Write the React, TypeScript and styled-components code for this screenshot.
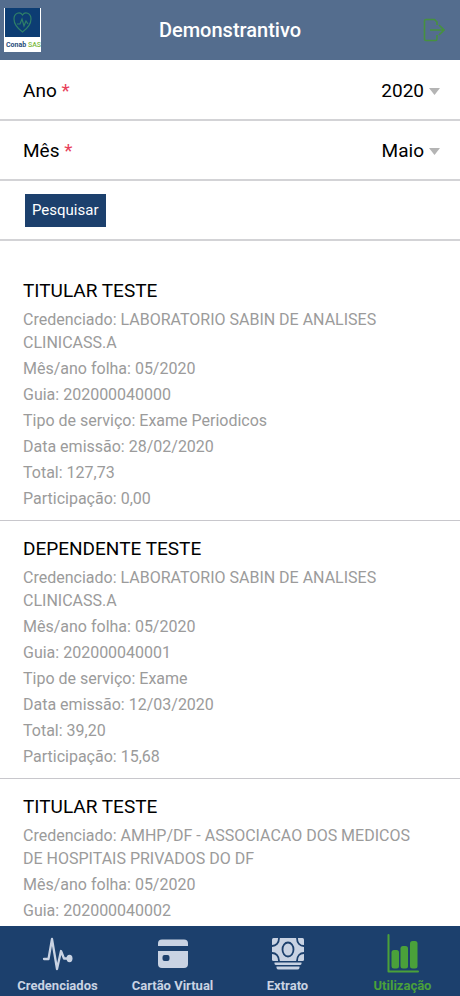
import React from "react";
import styled, { createGlobalStyle } from "styled-components";

const navy = "#1c406d";
const line = "#c8c7cc";

const GlobalStyle = createGlobalStyle`
  *, *::before, *::after { box-sizing: border-box; }
  body {
    margin: 0;
    background: #fff;
    color: #000;
    font-family: Roboto, "Liberation Sans", sans-serif;
  }
`;

const Screen = styled.div`
  display: flex;
  flex-direction: column;
  height: 100vh;
`;

const Header = styled.header`
  display: grid;
  grid-template-columns: 1fr auto 1fr;
  align-items: center;
  flex: none;
  height: 60px;
  padding: 0 4px;
  background: #546d8e;
`;

const Logo = styled.svg`
  display: block;
  width: 37px;
  height: 44px;
`;

const Title = styled.h1`
  margin: 0;
  color: #fff;
  font-size: 20px;
  line-height: 28px;
  font-weight: 500;
`;

const ExitButton = styled.button`
  justify-self: end;
  display: flex;
  padding: 0 11px 0 0;
  border: 0;
  background: none;
  color: #46913f;
`;

const Content = styled.main`
  flex: 1;
  min-height: 0;
  padding-top: 1px;
  overflow-y: auto;
  scrollbar-width: none;
`;

const FormRow = styled.div`
  display: flex;
  align-items: center;
  justify-content: space-between;
  min-height: 60px;
  padding: 2px 20px 0 23px;
  border-bottom: 2px solid #d3d3d6;
`;

const ActionRow = styled(FormRow)`
  padding: 0 25px;
`;

const Label = styled.label`
  font-size: 19px;
  line-height: 28px;
`;

const Required = styled.span`
  color: #e8405a;
`;

const SelectBox = styled.span`
  display: flex;
  align-items: center;
  gap: 5px;
`;

const Select = styled.select`
  appearance: none;
  width: 120px;
  padding: 0;
  border: 0;
  background: none;
  color: #000;
  font: inherit;
  font-size: 19px;
  line-height: 28px;
  text-align-last: right;
`;

const SearchButton = styled.button`
  height: 33px;
  padding: 0 7px;
  border: 0;
  background: ${navy};
  color: #fff;
  font: inherit;
  font-size: 15px;
`;

const List = styled.ul`
  margin: 0;
  padding: 22px 0 0;
  list-style: none;
`;

const Item = styled.li`
  padding: 14px 30px 7px 23px;
  border-bottom: 1px solid ${line};
`;

const Name = styled.h2`
  margin: 0 0 3px;
  font-size: 19px;
  line-height: 28px;
  font-weight: 400;
`;

const Detail = styled.p`
  margin: 0 0 3px;
  color: #9b9b9b;
  font-size: 16px;
  line-height: 23px;
`;

const TabBar = styled.nav`
  display: grid;
  grid-template-columns: repeat(4, 1fr);
  flex: none;
  height: 70px;
  background: ${navy};
`;

const Tab = styled.a<{ $active?: boolean }>`
  display: flex;
  flex-direction: column;
  align-items: center;
  padding-top: 8px;
  gap: 3px;
  color: ${(p) => (p.$active ? "#4aa13a" : "#c9d3e3")};
  font-size: 13px;
  line-height: 18px;
  font-weight: 700;
  text-decoration: none;
`;

function ExitIcon() {
  return (
    <svg width="22" height="24" viewBox="0 0 22 24" fill="none" stroke="currentColor" strokeWidth="1.6" aria-hidden="true">
      <path d="M14 7V4L11.500 1.500H3Q1.500 1.500 1.500 3V21Q1.500 22.500 3 22.500H12.500Q14 22.500 14 21V17M7 12H21M16 7L21 12L16 17" />
    </svg>
  );
}

function CaretIcon() {
  return (
    <svg width="11" height="7" viewBox="0 0 11 7" aria-hidden="true">
      <path d="M0 0H11L5.500 7Z" fill="#b4b4b4" />
    </svg>
  );
}

function PulseIcon() {
  return (
    <svg width="32" height="40" viewBox="0 0 32 40" aria-hidden="true">
      <path d="M2 25H6.500L10 5L15 35L19 17L22 24.500H27" fill="none" stroke="currentColor" strokeWidth="2.300" strokeLinejoin="round" strokeLinecap="round" />
      <ellipse cx="27.500" cy="24.500" rx="3" ry="3.700" fill="currentColor" />
    </svg>
  );
}

function CardIcon() {
  return (
    <svg width="32" height="40" viewBox="0 0 32 40" fill="currentColor" aria-hidden="true">
      <path d="M1 12V9.500Q1 5.500 5 5.500H27Q31 5.500 31 9.500V12Z" />
      <path fillRule="evenodd" d="M1 17H31V30Q31 34 27 34H5Q1 34 1 30ZM7.500 21Q5.500 21 5.500 23V25Q5.500 27 7.500 27H10.500Q12.500 27 12.500 25V23Q12.500 21 10.500 21Z" />
    </svg>
  );
}

function CashIcon() {
  return (
    <svg width="32" height="40" viewBox="0 0 32 40" aria-hidden="true">
      <rect x="0" y="4" width="32" height="23" rx="1.500" fill="currentColor" />
      <g fill="none" stroke={navy} strokeWidth="1.800">
        <ellipse cx="16" cy="15.500" rx="5.500" ry="7" />
        <path d="M0 12C4 12 7 9 7 4M32 12C28 12 25 9 25 4M0 19C4 19 7 22 7 27M32 19C28 19 25 22 25 27" />
      </g>
      <path d="M2.500 28.500H29.500V30Q29 31 28 31H4Q3 31 2.500 30ZM4.500 32.500H27.500V34Q27 35.500 25.500 35.500H6.500Q5 35.500 4.500 34Z" fill="currentColor" />
    </svg>
  );
}

function ChartIcon() {
  return (
    <svg width="32" height="40" viewBox="0 0 32 40" fill="currentColor" aria-hidden="true">
      <path d="M1.500 1V37.500H31" fill="none" stroke="currentColor" strokeWidth="2" strokeLinecap="round" strokeLinejoin="round" />
      <rect x="4.500" y="16" width="7.500" height="18.500" rx="2.500" />
      <rect x="13.500" y="12" width="7.500" height="22.500" rx="2.500" />
      <rect x="23" y="7" width="7.500" height="27.500" rx="2.500" />
    </svg>
  );
}

function ConabLogo() {
  return (
    <Logo viewBox="0 0 37 44" role="img" aria-label="Conab SAS">
      <rect width="37" height="44" fill="#fff" />
      <rect x="1" width="35" height="29" fill="#0d3d73" />
      <g fill="none" stroke="#2f7f68" strokeWidth="1.200">
        <path d="M18.500 24C13 20 10 16 10 11C10 5 16 3 18.500 7C21 3 27 5 27 11C27 16 24 20 18.500 24Z" />
        <path d="M13 16L16 16L18 11L20 18L22 13L24 16" />
      </g>
      <text x="2" y="39" fontFamily="Roboto, sans-serif" fontSize="7" fontWeight="700" fill="#284d7c">
        Conab <tspan fontWeight="500" fill="#7bb83c">SAS</tspan>
      </text>
    </Logo>
  );
}

const records = [
  {
    name: "TITULAR TESTE",
    details: [
      "Credenciado: LABORATORIO SABIN DE ANALISES CLINICASS.A",
      "Mês/ano folha: 05/2020",
      "Guia: 202000040000",
      "Tipo de serviço: Exame Periodicos",
      "Data emissão: 28/02/2020",
      "Total: 127,73",
      "Participação: 0,00",
    ],
  },
  {
    name: "DEPENDENTE TESTE",
    details: [
      "Credenciado: LABORATORIO SABIN DE ANALISES CLINICASS.A",
      "Mês/ano folha: 05/2020",
      "Guia: 202000040001",
      "Tipo de serviço: Exame",
      "Data emissão: 12/03/2020",
      "Total: 39,20",
      "Participação: 15,68",
    ],
  },
  {
    name: "TITULAR TESTE",
    details: [
      "Credenciado: AMHP/DF - ASSOCIACAO DOS MEDICOS DE HOSPITAIS PRIVADOS DO DF",
      "Mês/ano folha: 05/2020",
      "Guia: 202000040002",
    ],
  },
];

const tabs = [
  { label: "Credenciados", Icon: PulseIcon },
  { label: "Cartão Virtual", Icon: CardIcon },
  { label: "Extrato", Icon: CashIcon },
  { label: "Utilização", Icon: ChartIcon, active: true },
];

function SelectField({ id, label, value }: { id: string; label: string; value: string }) {
  return (
    <FormRow>
      <Label htmlFor={id}>
        {label} <Required>*</Required>
      </Label>
      <SelectBox>
        <Select id={id} defaultValue={value} required>
          <option>{value}</option>
        </Select>
        <CaretIcon />
      </SelectBox>
    </FormRow>
  );
}

export default function App() {
  return (
    <Screen>
      <GlobalStyle />
      <Header>
        <ConabLogo />
        <Title>Demonstrantivo</Title>
        <ExitButton type="button" aria-label="Sair">
          <ExitIcon />
        </ExitButton>
      </Header>
      <Content>
        <SelectField id="ano" label="Ano" value="2020" />
        <SelectField id="mes" label="Mês" value="Maio" />
        <ActionRow>
          <SearchButton type="button">Pesquisar</SearchButton>
        </ActionRow>
        <List>
          {records.map((record, index) => (
            <Item key={index}>
              <Name>{record.name}</Name>
              {record.details.map((detail) => (
                <Detail key={detail}>{detail}</Detail>
              ))}
            </Item>
          ))}
        </List>
      </Content>
      <TabBar>
        {tabs.map(({ label, Icon, active }) => (
          <Tab key={label} href="#" $active={active} aria-current={active ? "page" : undefined}>
            <Icon />
            {label}
          </Tab>
        ))}
      </TabBar>
    </Screen>
  );
}
